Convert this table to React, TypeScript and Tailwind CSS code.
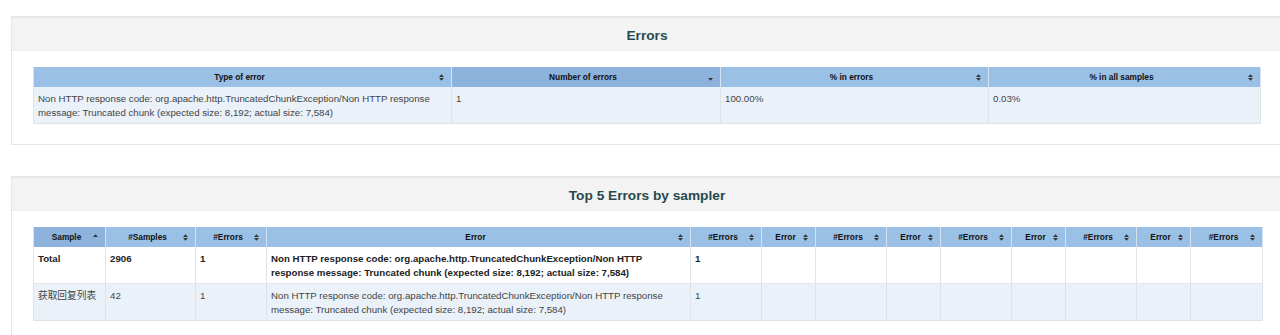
import React from "react";

type Sort = "both" | "asc" | "desc";

type Column = {
  label: string;
  width: number;
  sort?: Sort;
};

const errorColumns: Column[] = [
  { label: "Type of error", width: 418 },
  { label: "Number of errors", width: 269, sort: "desc" },
  { label: "% in errors", width: 268 },
  { label: "% in all samples", width: 272 },
];

const topColumns: Column[] = [
  { label: "Sample", width: 72, sort: "asc" },
  { label: "#Samples", width: 90 },
  { label: "#Errors", width: 71 },
  { label: "Error", width: 424 },
  { label: "#Errors", width: 71 },
  { label: "Error", width: 54 },
  { label: "#Errors", width: 71 },
  { label: "Error", width: 54 },
  { label: "#Errors", width: 71 },
  { label: "Error", width: 54 },
  { label: "#Errors", width: 71 },
  { label: "Error", width: 54 },
  { label: "#Errors", width: 72 },
];

const ERROR_TEXT =
  "Non HTTP response code: org.apache.http.TruncatedChunkException/Non HTTP response message: Truncated chunk (expected size: 8,192; actual size: 7,584)";

function SortIcon({ sort = "both" }: { sort?: Sort }) {
  return (
    <svg width="5" height="7" viewBox="0 0 5 7" className="shrink-0">
      {sort !== "desc" && <path d="M0 3 L2.5 0.2 L5 3 Z" fill="#333" />}
      {sort !== "asc" && <path d="M0 4 L5 4 L2.5 6.8 Z" fill="#333" />}
    </svg>
  );
}

function HeaderCell({ col }: { col: Column }) {
  const sorted = col.sort === "asc" || col.sort === "desc";
  return (
    <th
      className={`h-[20px] border-x border-[#d4e2f1] p-0 font-bold ${
        sorted ? "bg-[#8db3dc]" : "bg-[#9ac0e6]"
      }`}
    >
      <div className="flex h-[20px] items-center pt-[1px] pl-[6px] pr-[7px]">
        <span className="flex-1 text-center text-[8.3px] leading-[19px] text-[#111]">
          {col.label}
        </span>
        <SortIcon sort={col.sort} />
      </div>
    </th>
  );
}

function Cell({
  children,
  bold,
}: {
  children?: React.ReactNode;
  bold?: boolean;
}) {
  return (
    <td
      className={`h-[36px] border-x border-[#dfe4ea] px-[4px] pt-[5px] pb-[3px] align-top text-[9.7px] leading-[14px] ${
        bold ? "font-bold text-[#222]" : "text-[#444]"
      }`}
    >
      {children}
    </td>
  );
}

function Panel({
  title,
  children,
  className = "",
}: {
  title: string;
  children: React.ReactNode;
  className?: string;
}) {
  return (
    <section
      className={`w-[1272px] border border-t-2 border-[#e6e6e6] bg-white ${className}`}
    >
      <div className="flex h-[33px] items-center justify-center border-b border-[#ededed] bg-[#f3f3f3] pt-[5px]">
        <h2 className="text-[13.7px] font-bold text-[#284a4e]">{title}</h2>
      </div>
      <div className="px-[21px] pt-[16px] pb-[20px]">{children}</div>
    </section>
  );
}

function Table({
  columns,
  children,
}: {
  columns: Column[];
  children: React.ReactNode;
}) {
  return (
    <table className="w-[1227px] table-fixed border-collapse">
      <colgroup>
        {columns.map((c, i) => (
          <col key={i} style={{ width: c.width }} />
        ))}
      </colgroup>
      <thead>
        <tr>
          {columns.map((c, i) => (
            <HeaderCell key={i} col={c} />
          ))}
        </tr>
      </thead>
      <tbody>{children}</tbody>
    </table>
  );
}

export default function App() {
  const emptyCells = Array.from({ length: 9 });

  return (
    <div
      className="w-full overflow-hidden bg-white pt-[16px] pb-[40px]"
      style={{ fontFamily: '"Liberation Sans", "Noto Sans CJK SC", sans-serif' }}
    >
      <div className="ml-[11px]">
        <Panel title="Errors">
          <Table columns={errorColumns}>
            <tr className="border-b border-[#dde3ea] bg-[#eaf1f9]">
              <Cell>{ERROR_TEXT}</Cell>
              <Cell>1</Cell>
              <Cell>100.00%</Cell>
              <Cell>0.03%</Cell>
            </tr>
          </Table>
        </Panel>

        <Panel title="Top 5 Errors by sampler" className="mt-[31px]">
          <Table columns={topColumns}>
            <tr className="border-b border-[#e3e6ea] bg-white">
              <Cell bold>Total</Cell>
              <Cell bold>2906</Cell>
              <Cell bold>1</Cell>
              <Cell bold>{ERROR_TEXT}</Cell>
              <Cell bold>1</Cell>
              {emptyCells.map((_, i) => (
                <Cell key={i} />
              ))}
            </tr>
            <tr className="border-b border-[#dde3ea] bg-[#eaf1f9]">
              <Cell>获取回复列表</Cell>
              <Cell>42</Cell>
              <Cell>1</Cell>
              <Cell>{ERROR_TEXT}</Cell>
              <Cell>1</Cell>
              {emptyCells.map((_, i) => (
                <Cell key={i} />
              ))}
            </tr>
          </Table>
        </Panel>
      </div>
    </div>
  );
}
